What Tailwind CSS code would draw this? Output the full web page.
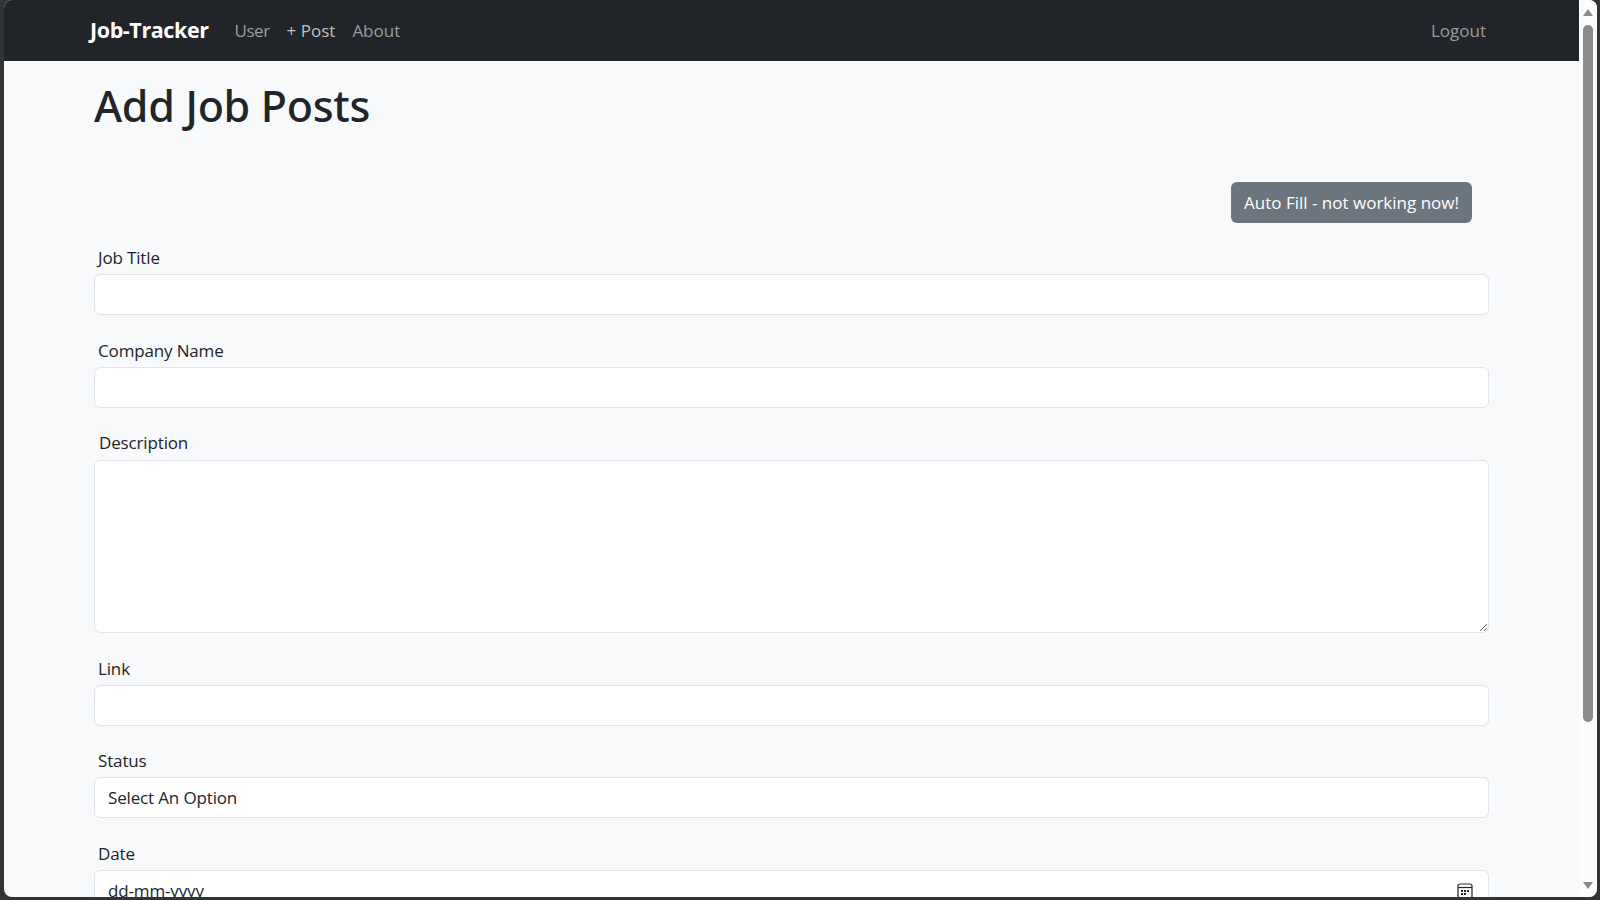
<!DOCTYPE html>
<html lang="en">
<head>
  <meta charset="UTF-8">
  <title>Job-Tracker</title>
  <script src="https://cdn.jsdelivr.net/npm/@tailwindcss/browser@4"></script>
</head>
<body class="h-screen overflow-hidden bg-[#333333] font-['Open_Sans','Noto_Sans',sans-serif] text-[17px] text-[#212529]">
  <div class="ml-[4px] mr-[3px] flex h-[897px] overflow-hidden rounded-lg bg-[#f8f9fa]">
    <div class="h-full flex-1 overflow-hidden">
      <!-- navbar -->
      <nav class="flex h-[61px] items-center justify-between bg-[#212529] pl-[86px] pr-[93px]">
        <div class="flex items-center">
          <a href="#" class="text-[21.5px] font-bold tracking-[-0.4px] text-white">Job-Tracker</a>
          <ul class="ml-[26px] flex gap-[17px] text-[#9b9c9e]">
            <li><a href="#" class="tracking-[-0.5px]">User</a></li>
            <li><a href="#" class="text-[#bfc0c1]">+ Post</a></li>
            <li><a href="#">About</a></li>
          </ul>
        </div>
        <a href="#" class="text-[#9b9c9e]">Logout</a>
      </nav>

      <main class="pl-[90px] pr-[90px]">
        <h1 class="pt-[18px] font-['Noto_Sans',sans-serif] text-[43px] leading-[54px] font-medium tracking-[-0.3px]">Add Job Posts</h1>

        <div class="mt-[49px] flex justify-end pr-[17px]">
          <button class="h-[41px] w-[241px] rounded-md bg-[#6c757d] pt-[1px] text-center text-white">Auto Fill - not working now!</button>
        </div>

        <form class="mt-[21px] flex flex-col tracking-[-0.15px]">
          <label class="pb-[2px] pl-[4px] leading-[28px]">Job Title</label>
          <input type="text" class="h-[41px] rounded-md border border-[#e1e4e8] bg-white">

          <label class="mt-[22px] pb-[3px] pl-[4px] leading-[27px]">Company Name</label>
          <input type="text" class="h-[41px] rounded-md border border-[#e1e4e8] bg-white">

          <label class="mt-[22px] pb-[4px] pl-[5px] leading-[26px]">Description</label>
          <textarea class="h-[173px] rounded-md border border-[#e1e4e8] bg-white"></textarea>

          <label class="mt-[22px] pb-[2px] pl-[4px] leading-[28px]">Link</label>
          <input type="text" class="h-[41px] rounded-md border border-[#e1e4e8] bg-white">

          <label class="mt-[21px] pb-[2px] pl-[4px] leading-[28px]">Status</label>
          <select class="h-[41px] appearance-none rounded-md border border-[#e1e4e8] bg-white px-[13px] text-[#212529]">
            <option>Select An Option</option>
          </select>

          <label class="mt-[22px] pb-[2px] pl-[4px] leading-[28px]">Date</label>
          <div class="flex h-[41px] items-center justify-between rounded-md border border-[#e1e4e8] bg-white pl-[13px] pr-[15px]">
            <span>dd-mm-yyyy</span>
            <svg class="h-[16px] w-[16px] text-[#212529]" viewBox="0 0 16 16" fill="none">
              <rect x="1" y="1" width="14" height="14" rx="2" stroke="currentColor" stroke-width="1.2"/>
              <path d="M1 4.5h14" stroke="currentColor" stroke-width="1.2"/>
              <path d="M4 7h2v2H4zM7 7h2v2H7zM10 7h2v2h-2zM4 10h2v2H4zM7 10h2v2H7z" fill="currentColor"/>
            </svg>
          </div>
        </form>
      </main>
    </div>

    <!-- scrollbar -->
    <div class="relative h-full w-[18px] shrink-0 bg-[#fbfbfc]">
      <div class="absolute left-[4px] top-[9px] h-0 w-0 border-x-[5.5px] border-b-[7px] border-x-transparent border-b-[#8a8a8a]"></div>
      <div class="absolute left-[4px] top-[25px] h-[697px] w-[10px] rounded-full bg-[#8a8a8a]"></div>
      <div class="absolute left-[4px] top-[882px] h-0 w-0 border-x-[5.5px] border-t-[7px] border-x-transparent border-t-[#8a8a8a]"></div>
    </div>
  </div>
</body>
</html>
